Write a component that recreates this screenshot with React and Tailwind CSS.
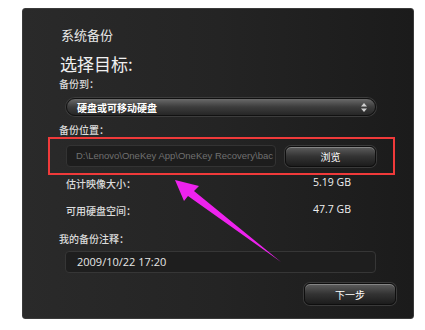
import React from 'react'

const cjk = { fontFamily: '"Noto Sans CJK SC", "Noto Sans", sans-serif' }

function GlossButton({ children, className }) {
  return (
    <div
      className={
        'flex items-center justify-center rounded-[6px] border border-[#0e0e0e] bg-gradient-to-b from-[#5e5e5e] via-[#333333] to-[#1c1c1c] text-[10px] text-white shadow-[inset_0_1px_0_rgba(255,255,255,0.25),0_0_0_1px_#3a3a3a] ' +
        className
      }
      style={cjk}
    >
      {children}
    </div>
  )
}

function Arrow() {
  return (
    <svg className="pointer-events-none absolute left-0 top-0" width="425" height="330">
      <polygon
        points="175,180 199,186 194,191 281,262 188,196 184,201"
        fill="#ee22ee"
      />
    </svg>
  )
}

export default function App() {
  return (
    <div className="relative h-[330px] w-[425px] bg-white pl-[22px] pt-[8px]" style={cjk}>
      <div className="flex h-[311px] w-[392px] flex-col rounded-[3px] border border-[#3a3a3a] bg-gradient-to-r from-[#2a2a2a] via-[#242424] to-[#1b1b1b] pl-[36px]">
        <div className="ml-[2px] mt-[17px] flex h-[18px] items-center text-[13px] text-[#e8e8e8]">系统备份</div>
        <div className="ml-[1px] mt-[10px] flex h-[20px] items-center text-[17px] text-[#f0f0f0]">选择目标:</div>
        <div className="mt-[3px] flex h-[12px] items-center text-[10px] font-medium text-[#dcdcdc]">备份到：</div>

        <div className="ml-[7px] mt-[9px] flex h-[18px] w-[310px] items-center justify-between rounded-full border border-[#111] bg-gradient-to-b from-[#6a6a6a] via-[#3c3c3c] to-[#262626] pl-[10px] pr-[8px] shadow-[0_0_0_1px_#3c3c3c]">
          <span className="text-[10px] font-bold text-white">硬盘或可移动硬盘</span>
          <svg width="6" height="9" viewBox="0 0 6 9">
            <polygon points="3,0 6,3.5 0,3.5" fill="#d0d0d0" />
            <polygon points="0,5.5 6,5.5 3,9" fill="#d0d0d0" />
          </svg>
        </div>

        <div className="mt-[7px] flex h-[12px] items-center text-[10px] font-medium text-[#dcdcdc]">备份位置：</div>

        <div className="ml-[-11px] mt-[2px] flex h-[38px] w-[347px] items-center border-[2px] border-[#f03a3a] pl-[16px]">
          <div className="flex h-[22px] w-[210px] items-center overflow-hidden whitespace-nowrap rounded-[4px] border border-[#333] bg-[#1d1d1d] pl-[9px] text-[9.5px] text-[#707070]" style={{ fontFamily: '"Liberation Sans", sans-serif' }}>
            D:\Lenovo\OneKey App\OneKey Recovery\bac
          </div>
          <GlossButton className="ml-[9px] h-[21px] w-[91px]">浏览</GlossButton>
        </div>

        <div className="mt-[2px] flex h-[12px] items-center text-[10px] font-medium text-[#dcdcdc]">
          <span className="ml-[7px] w-[247px]">估计映像大小：</span>
          <span className="text-[10.5px] text-[#f0f0f0]" style={{ fontFamily: '"Open Sans", sans-serif' }}>5.19 GB</span>
        </div>
        <div className="mt-[15px] flex h-[12px] items-center text-[10px] font-medium text-[#dcdcdc]">
          <span className="ml-[7px] w-[247px]">可用硬盘空间：</span>
          <span className="text-[10.5px] text-[#f0f0f0]" style={{ fontFamily: '"Open Sans", sans-serif' }}>47.7 GB</span>
        </div>

        <div className="mt-[16px] flex h-[12px] items-center text-[10px] font-medium text-[#dcdcdc]">我的备份注释：</div>
        <div className="ml-[6px] mt-[7px] flex h-[22px] w-[311px] items-center rounded-[4px] border border-[#363636] bg-[#1e1e1e] pl-[11px] text-[11px] text-[#e6e6e6]" style={{ fontFamily: '"Open Sans", sans-serif' }}>
          2009/10/22 17:20
        </div>

        <div className="mt-[10px] flex">
          <GlossButton className="ml-[245px] h-[22px] w-[92px]">下一步</GlossButton>
        </div>
      </div>
      <Arrow />
    </div>
  )
}
